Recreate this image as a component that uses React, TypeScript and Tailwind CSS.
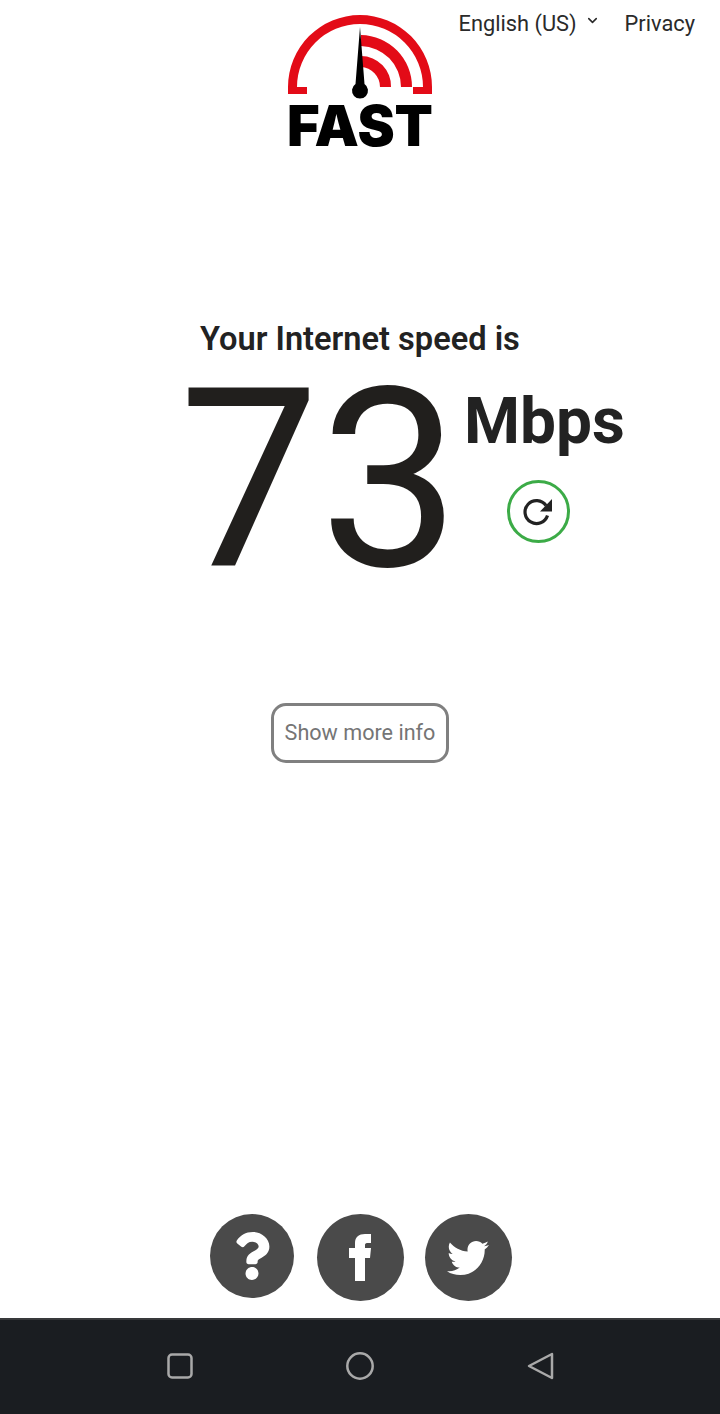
import { FaQuestion, FaTwitter } from "react-icons/fa";
import { LuChevronDown } from "react-icons/lu";

function Logo() {
  return (
    <svg viewBox="280 10 160 140" className="w-[160px] h-[140px] mt-[10px] overflow-visible">
      <path
        d="M288 94 V87 A72 72 0 0 1 432 87 V94 H413 V87 H423 A63 63 0 0 0 297 87 H307 V94 Z"
        fill="#e30b17"
      />
      <path d="M361 35 A52 52 0 0 1 412 87 H401 A41 41 0 0 0 361 46 Z" fill="#e30b17" />
      <path d="M361 56 A30 30 0 0 1 391 87 H380 A20 20 0 0 0 361 67 Z" fill="#e30b17" />
      <path d="M360 27 L364.5 84 A8 8 0 1 1 355.5 84 Z" fill="#000" />
      <text
        x="287"
        y="146"
        textLength="146"
        lengthAdjust="spacingAndGlyphs"
        fontSize="56"
        fontWeight="900"
        fill="#000"
        className="font-['Inter',sans-serif]"
      >
        FAST
      </text>
    </svg>
  );
}

function SocialButton({ size, children }: { size: string; children: React.ReactNode }) {
  return (
    <a className={`${size} flex items-center justify-center rounded-full bg-[#4a4a4a] text-white`}>
      {children}
    </a>
  );
}

export default function App() {
  return (
    <div className="w-[720px] h-[1414px] flex flex-col bg-white font-['Roboto',sans-serif] text-[#222222]">
      <header className="grid grid-cols-[1fr_160px_1fr] h-[160px]">
        <div />
        <Logo />
        <nav className="flex items-start justify-end pr-[25px] pt-[9px] text-[21.8px] leading-[30px] text-[#2a2a2a] whitespace-nowrap">
          <span>English (US)</span>
          <LuChevronDown className="w-[15px] h-[15px] ml-[8px] mt-[4px]" strokeWidth={2.5} />
          <span className="ml-[25px]">Privacy</span>
        </nav>
      </header>

      <main className="flex flex-col items-center flex-1">
        <h1 className="mt-[159px] text-[32.6px] leading-[40px] font-semibold whitespace-nowrap">Your Internet speed is</h1>

        <div className="flex w-full pl-[179px] h-[344px]">
          <div className="text-[250px] leading-[230px] mt-[7px] font-normal text-[#211f1d]">73</div>
          <div className="flex flex-col items-center ml-[4px]">
            <div className="text-[64px] leading-[76px] font-bold mt-[25px]">Mbps</div>
            <button className="w-[63px] h-[63px] mt-[20px] mr-[12px] rounded-full border-[3px] border-[#3cab47] flex items-center justify-center">
              <svg viewBox="0 0 32 32" className="w-[32px] h-[32px]">
                <path
                  d="M25.5 19.5 A11.5 11.5 0 1 1 24 9.5"
                  fill="none"
                  stroke="#222222"
                  strokeWidth="3.2"
                />
                <path d="M30 3 V15.5 H18 Z" fill="#222222" />
              </svg>
            </button>
          </div>
        </div>

        <button className="w-[178px] h-[60px] rounded-[15px] border-[3px] border-[#808080] text-[21.6px] text-[#757575]">
          Show more info
        </button>

        <div className="mt-auto mb-[17px] flex items-start ml-[1px]">
          <SocialButton size="w-[84px] h-[84px]">
            <FaQuestion className="w-[40px] h-[48px]" />
          </SocialButton>
          <div className="w-[23px]" />
          <SocialButton size="w-[87px] h-[87px]">
            <svg viewBox="0 0 22 47" className="w-[22px] h-[47px]">
              <path
                d="M6 47 V24 H0 V14 H6 V9 C6 3 10 0 16 0 H22 V9 H18 C16.5 9 16 10 16 11 V14 H22 L21 24 H16 V47 Z"
                fill="currentColor"
              />
            </svg>
          </SocialButton>
          <div className="w-[21px]" />
          <SocialButton size="w-[87px] h-[87px]">
            <FaTwitter className="w-[42px] h-[42px]" />
          </SocialButton>
        </div>
      </main>

      <footer className="h-[96px] bg-[#1a1d21] border-t-2 border-[#38393b] grid grid-cols-[180px_180px_180px] justify-center items-center justify-items-center pb-[2px] text-[#a9a9a9]">
        <svg viewBox="0 0 26 26" className="w-[26px] h-[26px]">
          <rect x="1.5" y="1.5" width="23" height="23" rx="3.5" fill="none" stroke="currentColor" strokeWidth="2.5" />
        </svg>
        <svg viewBox="0 0 30 30" className="w-[30px] h-[30px]">
          <circle cx="15" cy="15" r="12.7" fill="none" stroke="currentColor" strokeWidth="2.5" />
        </svg>
        <svg viewBox="0 0 30 30" className="w-[30px] h-[30px]">
          <path d="M27 3 L4 15 L27 27 Z" fill="none" stroke="currentColor" strokeWidth="2.5" strokeLinejoin="round" />
        </svg>
      </footer>
    </div>
  );
}
